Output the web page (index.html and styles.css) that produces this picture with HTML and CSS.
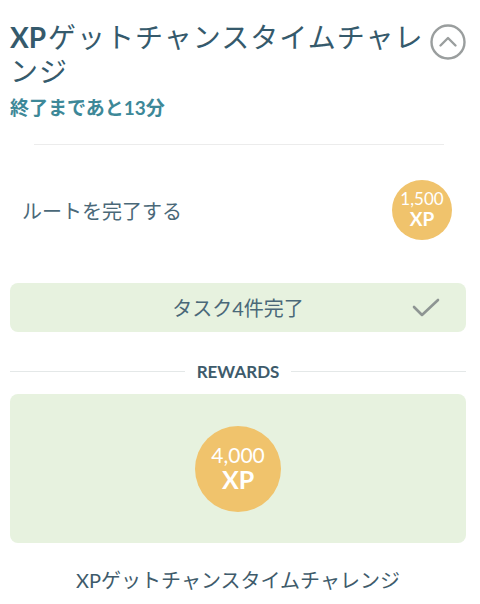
FILE: index.html
```html
<!DOCTYPE html>
<html lang="ja">
<head>
  <meta charset="UTF-8">
  <title>XPゲットチャンスタイムチャレンジ</title>
  <meta name="viewport" content="width=device-width, initial-scale=1.0">
  <link rel="stylesheet" href="styles.css">
</head>
<body>
<div class="page">
  <div class="head">
    <div class="head-text">
      <h1 class="title"><b>XP</b>ゲットチャンスタイムチャレンジ</h1>
      <div class="timer">終了まであと13分</div>
    </div>
    <button class="collapse" aria-label="閉じる">
      <svg width="36" height="36" viewBox="0 0 36 36">
        <circle cx="18" cy="18" r="16.5" fill="none" stroke="#9a9e9e" stroke-width="2.4"/>
        <path d="M10.5 21.5 L18 14 L25.5 21.5" fill="none" stroke="#9a9e9e" stroke-width="2.4" stroke-linecap="round" stroke-linejoin="round"/>
      </svg>
    </button>
  </div>

  <hr class="sep">

  <div class="task">
    <span class="task-name">ルートを完了する</span>
    <div class="xp xp-small"><span class="num">1,500</span><span class="unit">XP</span></div>
  </div>

  <div class="done">
    <span>タスク4件完了</span>
    <svg class="check" width="28" height="20" viewBox="0 0 28 20">
      <path d="M2 9 L10 17 L26 2" fill="none" stroke="#8e9593" stroke-width="2.6" stroke-linecap="round" stroke-linejoin="round"/>
    </svg>
  </div>

  <div class="rewards-label"><span>REWARDS</span></div>

  <div class="reward-box">
    <div class="xp xp-big"><span class="num">4,000</span><span class="unit">XP</span></div>
  </div>

  <div class="footer-name">XPゲットチャンスタイムチャレンジ</div>
</div>
</body>
</html>
```

FILE: styles.css
```css
body {
  margin: 0;
  background: #fff;
  font-family: 'Lato', 'Noto Sans CJK JP', sans-serif;
  color: #3e5b6b;
}
.page { padding: 0 14px 0 10px; }

.head {
  display: flex;
  align-items: flex-start;
  padding-top: 20px;
}
.head-text { flex: 1; }
.title {
  margin: 0;
  font-size: 28px;
  font-weight: normal;
  line-height: 34px;
  color: #355a6c;
  letter-spacing: 1px;
}
.title b { font-weight: bold; letter-spacing: 0; margin-right: 2px; }
.timer {
  margin-top: 5px;
  font-size: 19px;
  font-weight: bold;
  color: #3d8898;
}
.collapse {
  border: none;
  background: none;
  padding: 0;
  margin: 4px 0 0 6px;
  width: 36px;
  height: 36px;
}

.sep {
  border: none;
  border-top: 1px solid #ececec;
  margin: 24px 22px 0 24px;
}

.task {
  display: flex;
  align-items: center;
  justify-content: space-between;
  padding: 35px 14px 43px 12px;
}
.task-name { font-size: 20px; color: #4a6878; }

.xp {
  border-radius: 50%;
  background: #f0c36c;
  color: #fff;
  display: flex;
  flex-direction: column;
  align-items: center;
  justify-content: center;
}
.xp-small { width: 60px; height: 60px; line-height: 1.1; }
.xp-small .num { font-size: 17px; }
.xp-small .unit { font-size: 19px; font-weight: bold; }
.xp-big { width: 86px; height: 86px; line-height: 1.05; }
.xp-big .num { font-size: 21px; }
.xp-big .unit { font-size: 25px; font-weight: bold; }

.done {
  position: relative;
  background: #e7f2df;
  border-radius: 8px;
  height: 49px;
  display: flex;
  align-items: center;
  justify-content: center;
  font-size: 20px;
  color: #4a6878;
}
.done .check { position: absolute; right: 26px; top: 15px; }

.rewards-label {
  display: flex;
  align-items: center;
  gap: 12px;
  margin: 29px 0 12px;
  font-size: 17px;
  font-weight: bold;
  color: #3e5b6b;
}
.rewards-label::before, .rewards-label::after {
  content: '';
  flex: 1;
  border-top: 1px solid #e4e8e8;
}

.reward-box {
  background: #e7f2df;
  border-radius: 8px;
  height: 149px;
  display: flex;
  align-items: center;
  justify-content: center;
}

.footer-name {
  text-align: center;
  margin-top: 22px;
  font-size: 20px;
  color: #3e5b6b;
}
```
